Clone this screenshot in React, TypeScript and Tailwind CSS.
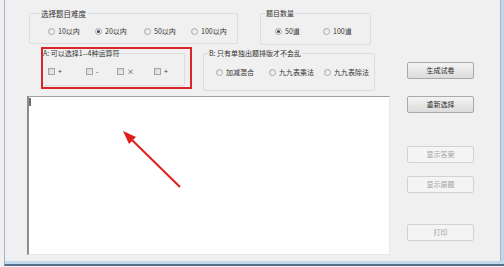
import React from 'react';

const Radio = ({ checked = false }: { checked?: boolean }) => (
  <span className="w-[7px] h-[7px] shrink-0 rounded-full border border-[#a8a8a8] bg-linear-to-br from-[#dcdcdc] to-white flex items-center justify-center">
    {checked && <span className="w-[3px] h-[3px] rounded-full bg-[#3c4a58]" />}
  </span>
);

const Check = () => (
  <span className="w-[7px] h-[7px] shrink-0 border border-[#a4a4a4] bg-linear-to-br from-[#d4d4d4] to-[#efefef]" />
);

const Option = ({ w, checked, box, label }: { w: string; checked?: boolean; box?: boolean; label: string }) => (
  <div className={`${w} flex items-center gap-[3px]`}>
    {box ? <Check /> : <Radio checked={checked} />}
    <span>{label}</span>
  </div>
);

const Btn = ({ label, disabled }: { label: string; disabled?: boolean }) => (
  <div
    className={
      disabled
        ? 'h-[17px] w-[67px] rounded-[2px] border border-[#d2d2d2] bg-[#f4f4f4] text-[#a2a2a2] flex items-center justify-center'
        : 'h-[17px] w-[67px] rounded-[2px] border border-[#a9a9a9] bg-linear-to-b from-[#f4f4f4] to-[#dcdcdc] text-[#2a2a2a] flex items-center justify-center'
    }
  >
    {label}
  </div>
);

export default function App() {
  return (
    <div className="relative w-[504px] h-[267px] bg-[#f0f0f0] overflow-hidden font-['Noto_Sans_CJK_SC',sans-serif] text-[7px] leading-[9px] text-[#333]">
      <div className="ml-[4px] h-[266px] flex flex-col border-l border-[#9fb4c8] border-b-2 border-b-[#566f88]">
        <div className="flex-1 flex border-b-[3px] border-b-[#c3daee]">
          {/* client area */}
          <div className="flex-1 flex border-r border-[#b4b4b4]">
            {/* left column */}
            <div className="ml-[22px] w-[363px] flex flex-col">
              <div className="flex items-start pt-[9px] ml-[2px] gap-[22px]">
                <fieldset className="w-[209px] h-[35px] border border-[#d8dde2] rounded-[2px] px-0">
                  <legend className="ml-[10px] px-[1px] text-[7.5px]">选择题目难度</legend>
                  <div className="flex items-center pl-[18px] mt-[9px]">
                    <Option w="w-[47px]" label="10以内" />
                    <Option w="w-[49px]" checked label="20以内" />
                    <Option w="w-[47px]" label="50以内" />
                    <Option w="w-[40px]" label="100以内" />
                  </div>
                </fieldset>
                <fieldset className="w-[111px] h-[36px] border border-[#d8dde2] rounded-[2px] px-0">
                  <legend className="ml-[4px] px-[1px]">题目数量</legend>
                  <div className="flex items-center pl-[14px] mt-[9px]">
                    <Option w="w-[48px]" checked label="50道" />
                    <Option w="w-[40px]" label="100道" />
                  </div>
                </fieldset>
              </div>

              <div className="flex items-start mt-[2px]">
                <div className="ml-[14px] w-[151px] h-[42px] border-2 border-[#d9252c]">
                  <fieldset className="w-[142px] h-[37px] border border-[#d8dde2] border-l-0 rounded-[2px] px-0">
                    <legend className="px-0">A: 可以选择1--4种运算符</legend>
                    <div className="flex items-center pl-[5px] mt-[9px]">
                      <Option w="w-[38px]" box label="+" />
                      <Option w="w-[31px]" box label="-" />
                      <Option w="w-[37px]" box label="×" />
                      <Option w="w-[20px]" box label="+" />
                    </div>
                  </fieldset>
                </div>
                <fieldset className="ml-[11px] mt-[2px] w-[171px] h-[42px] border border-[#d8dde2] rounded-[2px] px-0">
                  <legend className="ml-[4px] px-[1px]">B: 只有单独出题排版才不会乱</legend>
                  <div className="flex items-center pl-[12px] mt-[10px]">
                    <Option w="w-[53px]" label="加减混合" />
                    <Option w="w-[55px]" label="九九表乘法" />
                    <Option w="w-[50px]" label="九九表除法" />
                  </div>
                </fieldset>
              </div>

              <div className="mt-[5px] h-[159px] bg-white border-t border-l-2 border-t-[#a0a0a0] border-l-[#8c8c8c] border-r border-b border-r-[#e8e8e8] border-b-[#e8e8e8] pt-[1px]">
                <div className="w-[2px] h-[8px] bg-[#6e6e6e]" />
              </div>
            </div>

            {/* right column */}
            <div className="ml-[17px] pt-[62px] flex flex-col">
              <Btn label="生成试卷" />
              <div className="mt-[17px]"><Btn label="重新选择" /></div>
              <div className="mt-[33px]"><Btn label="显示答案" disabled /></div>
              <div className="mt-[13px]"><Btn label="显示原题" disabled /></div>
              <div className="mt-[31px]"><Btn label="打印" disabled /></div>
            </div>
          </div>
          <div className="w-[3px] bg-[#bdd6ee]" />
        </div>
      </div>

      {/* annotation arrow */}
      <svg className="absolute left-0 top-0 pointer-events-none" width="504" height="267">
        <line x1="180" y1="187" x2="132" y2="140" stroke="#e01f1c" strokeWidth="2" />
        <polygon points="123,131 136,137 129,144" fill="#e01f1c" />
      </svg>
    </div>
  );
}
